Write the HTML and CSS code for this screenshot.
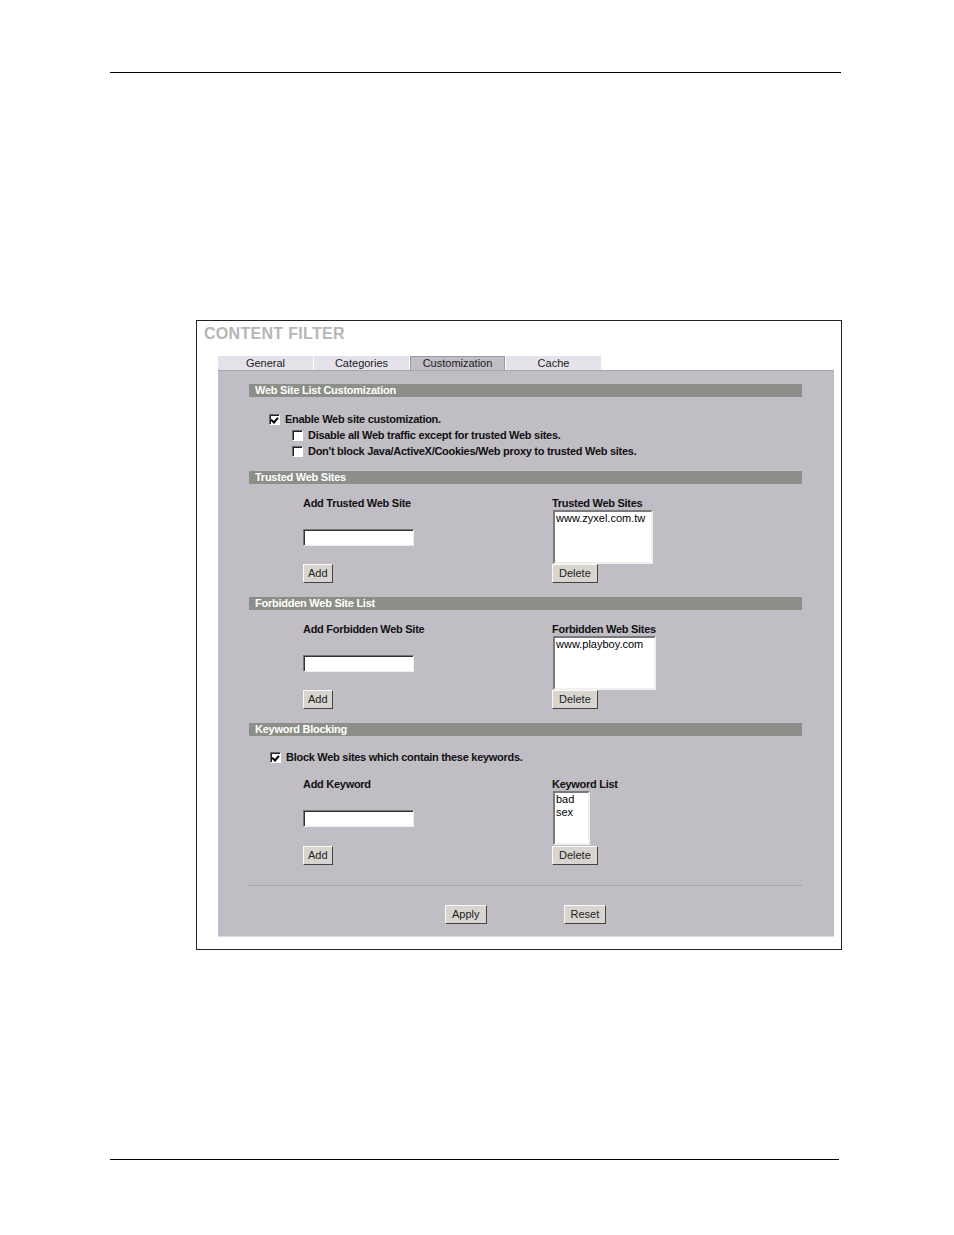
FILE: index.html
```html
<!DOCTYPE html>
<html>
<head>
<meta charset="utf-8">
<link rel="stylesheet" href="styles.css">
</head>
<body>
<div class="page">
  <div class="rule rule-top"></div>
  <div class="frame">
    <div class="title">CONTENT FILTER</div>
    <div class="tabs">
      <div class="tab">General</div>
      <div class="tab">Categories</div>
      <div class="tab active">Customization</div>
      <div class="tab">Cache</div>
    </div>
    <div class="panel">
      <div class="sec-head">Web Site List Customization</div>
      <div class="opts">
        <div class="opt"><span class="cb checked"></span>Enable Web site customization.</div>
        <div class="opt sub"><span class="cb"></span>Disable all Web traffic except for trusted Web sites.</div>
        <div class="opt sub"><span class="cb"></span>Don't block Java/ActiveX/Cookies/Web proxy to trusted Web sites.</div>
      </div>

      <div class="sec-head">Trusted Web Sites</div>
      <div class="pair">
        <div class="col left">
          <div class="lbl">Add Trusted Web Site</div>
          <div class="input"></div>
          <div class="btn">Add</div>
        </div>
        <div class="col right">
          <div class="lbl">Trusted Web Sites</div>
          <div class="list w100">www.zyxel.com.tw</div>
          <div class="btn">Delete</div>
        </div>
      </div>

      <div class="sec-head">Forbidden Web Site List</div>
      <div class="pair">
        <div class="col left">
          <div class="lbl">Add Forbidden Web Site</div>
          <div class="input"></div>
          <div class="btn">Add</div>
        </div>
        <div class="col right">
          <div class="lbl">Forbidden Web Sites</div>
          <div class="list w103">www.playboy.com</div>
          <div class="btn">Delete</div>
        </div>
      </div>

      <div class="sec-head">Keyword Blocking</div>
      <div class="opt kw"><span class="cb checked"></span>Block Web sites which contain these keywords.</div>
      <div class="pair kwpair">
        <div class="col left">
          <div class="lbl">Add Keyword</div>
          <div class="input"></div>
          <div class="btn">Add</div>
        </div>
        <div class="col right">
          <div class="lbl">Keyword List</div>
          <div class="list w37 kwlist">bad<br>sex</div>
          <div class="btn">Delete</div>
        </div>
      </div>
      <div class="sep"></div>
      <div class="actions">
        <div class="btn">Apply</div>
        <div class="btn">Reset</div>
      </div>
    </div>
  </div>
  <div class="rule rule-bottom"></div>
</div>
</body>
</html>
```

FILE: styles.css
```css
html, body {
  margin: 0;
  padding: 0;
  background: #ffffff;
}
body {
  font-family: "Liberation Sans", Arial, sans-serif;
  font-size: 11px;
  color: #111;
}
.page {
  width: 954px;
  height: 1235px;
  position: relative;
  padding-top: 72px;
  box-sizing: border-box;
}
.rule {
  height: 1px;
  background: #000;
  margin-left: 110px;
}
.rule-top { width: 731px; }
.rule-bottom { width: 729px; margin-top: 209px; }

.frame {
  margin-top: 247px;
  margin-left: 196px;
  width: 646px;
  height: 630px;
  box-sizing: border-box;
  border: 1px solid #222;
  background: #fff;
  padding: 4px 0 0 21px;
}
.title {
  font-size: 16px;
  font-weight: bold;
  color: #b6b6b6;
  margin-left: -14px;
  height: 20px;
  line-height: 18px;
  letter-spacing: 0.3px;
}
.tabs {
  display: flex;
  margin-top: 11px;
  height: 14px;
}
.tab {
  width: 95px;
  margin-right: 1px;
  height: 14px;
  line-height: 14px;
  text-align: center;
  background: #e6e2ea;
  color: #1a1a1a;
  font-size: 11px;
  box-sizing: border-box;
}
.tab.active {
  background: #c2bec6;
  border: 1px solid #9c98a0;
  border-bottom: none;
  line-height: 13px;
}
.panel {
  width: 616px;
  height: 567px;
  box-sizing: border-box;
  background: #c1bdc5;
  border-top: 1px solid #a8a4ac;
  border-bottom: 1px solid #e0dde2;
  padding: 13px 0 0 31px;
}
.sec-head {
  width: 553px;
  height: 13px;
  line-height: 13px;
  background: #8b8f88;
  color: #fff;
  font-weight: bold;
  font-size: 11px;
  letter-spacing: -0.25px;
  padding-left: 6px;
  box-sizing: border-box;
}
.opts {
  padding: 14px 0 12px 0;
}
.opt {
  height: 16px;
  display: flex;
  align-items: center;
  font-weight: bold;
  letter-spacing: -0.28px;
  padding-left: 20px;
}
.opt.sub { padding-left: 43px; }
.cb {
  width: 9px;
  height: 9px;
  background: #fff;
  border: 1px solid;
  border-color: #6a6a6a #fff #fff #6a6a6a;
  box-shadow: inset 1px 1px 0 #222;
  margin-right: 5px;
  position: relative;
  flex: none;
}
.cb.checked::after {
  content: "";
  position: absolute;
  left: 2px;
  top: 1px;
  width: 3px;
  height: 5px;
  border: solid #000;
  border-width: 0 2px 2px 0;
  transform: rotate(40deg);
}
.pair {
  display: grid;
  grid-template-columns: 249px auto;
  padding: 12px 0 14px 54px;
}
.col {
  display: flex;
  flex-direction: column;
  align-items: flex-start;
}
.lbl {
  height: 14px;
  line-height: 14px;
  font-weight: bold;
  letter-spacing: -0.28px;
}
.left .input {
  margin-top: 19px;
  width: 111px;
  height: 17px;
  box-sizing: border-box;
  background: #fff;
  border: 1px solid;
  border-color: #777 #eee #eee #777;
  box-shadow: inset 1px 1px 0 #333;
}
.left .btn { margin-top: 18px; }
.list {
  height: 54px;
  box-sizing: border-box;
  background: #fff;
  border: 2px solid;
  border-color: #7a7a7a #f0f0f0 #f0f0f0 #7a7a7a;
  padding: 0 0 0 1px;
  line-height: 13px;
  font-size: 11px;
  color: #000;
  margin-left: 1px;
}
.w100 { width: 100px; }
.w103 { width: 103px; }
.w37 { width: 37px; }
.btn {
  height: 19px;
  line-height: 17px;
  padding: 0 7px;
  box-sizing: border-box;
  background: #d8d5d0;
  border: 1px solid;
  border-color: #fafafa #444 #444 #fafafa;
  color: #222;
  font-size: 11px;
  text-align: center;
}
.right .btn { padding: 0 6px; }
.left .btn { padding: 0 4px; }
.opt.kw {
  margin-top: 13px;
  padding-left: 21px;
}
.kwpair {
  padding-top: 12px;
  padding-bottom: 0;
}
.kwpair .left .btn, .kwpair .right .btn { margin-top: 1px; }
.kwpair .left .btn { margin-top: 19px; }
.kwlist { height: 54px; }
.sep {
  margin-top: 20px;
  width: 553px;
  height: 1px;
  background: #a9a5ad;
}
.actions {
  display: flex;
  margin-top: 19px;
  padding-left: 196px;
  gap: 77px;
}
.actions .btn { padding: 0 6px; }
```
